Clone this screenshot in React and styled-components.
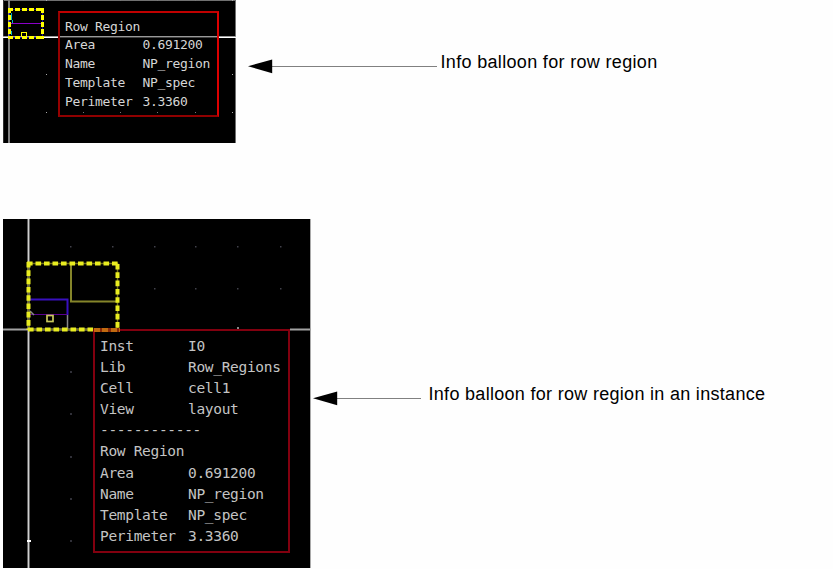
import React from "react";
import styled, { createGlobalStyle } from "styled-components";

const GlobalStyle = createGlobalStyle`
  body { margin: 0; background: #fefefe; overflow: hidden; }
`;

const Page = styled.main`
  width: 833px;
  height: 569px;
  box-sizing: border-box;
  padding-left: 3px;
  display: flex;
  flex-direction: column;
  gap: 76px;
  overflow: hidden;
`;

const Figure = styled.figure`
  margin: 0;
  display: flex;
  align-items: flex-start;
`;

const Canvas = styled.div`
  position: relative;
  flex: none;
  width: ${(p) => p.$width}px;
  height: ${(p) => p.$height}px;
  background: #000;
`;

const Plot = styled.svg`
  display: block;
  flex: none;
  shape-rendering: ${(p) => (p.$crisp ? "crispEdges" : "auto")};
`;

const Balloon = styled.dl`
  position: absolute;
  margin: 0;
  box-sizing: border-box;
  display: grid;
  align-content: start;
  white-space: pre;
  font-family: "DejaVu Sans Mono", monospace;
`;

const SmallBalloon = styled(Balloon)`
  left: 55px;
  top: 11px;
  width: 161px;
  height: 106px;
  padding: 4.6px 0 0 5px;
  border: solid;
  border-width: 2px 2px 2px 2px;
  border-color: #c00000 #dc0000 #900000 #960000;
  grid-template-columns: 77.5px 1fr;
  grid-auto-rows: 18.8px;
  line-height: 18.8px;
  font-size: 13px;
  letter-spacing: -0.33px;
  color: #d6d6d6;
`;

const LargeBalloon = styled(Balloon)`
  left: 90px;
  top: 109.5px;
  width: 197px;
  height: 224.5px;
  padding: 5.5px 0 0 5px;
  border: 2px solid #82000f;
  grid-template-columns: 88px 1fr;
  grid-auto-rows: 21.1px;
  line-height: 21.1px;
  font-size: 14.5px;
  letter-spacing: -0.31px;
  color: #c4c4c4;

  &::before {
    content: "";
    position: absolute;
    left: -1px;
    top: -3px;
    width: 26px;
    height: 4px;
    background: repeating-linear-gradient(90deg, #c06a10 0 5.6px, #8a2a08 5.6px 8.5px);
  }
`;

const Term = styled.dt`
  grid-column: ${(p) => (p.$wide ? "1 / -1" : "1")};
`;

const Value = styled.dd`
  margin: 0;
`;

const Callout = styled.figcaption`
  display: flex;
  align-items: flex-start;
  gap: ${(p) => p.$gap}px;
  margin: ${(p) => p.$top}px 0 0 ${(p) => p.$left}px;
`;

const ArrowBox = styled.span`
  padding-top: 7px;
`;

const Label = styled.span`
  font: 18px/20px "Liberation Sans", Arial, sans-serif;
  letter-spacing: ${(p) => p.$tracking}px;
  color: #000;
  white-space: nowrap;
`;

const region = [
  ["Row Region"],
  ["Area", "0.691200"],
  ["Name", "NP_region"],
  ["Template", "NP_spec"],
  ["Perimeter", "3.3360"],
];

const instance = [
  ["Inst", "I0"],
  ["Lib", "Row_Regions"],
  ["Cell", "cell1"],
  ["View", "layout"],
  ["------------"],
];

function Entries({ items }) {
  return items.map(([name, value]) => (
    <React.Fragment key={name}>
      <Term $wide={value === undefined}>{name}</Term>
      {value !== undefined && <Value>{value}</Value>}
    </React.Fragment>
  ));
}

function Dots({ xs, ys, size, fill }) {
  return ys.flatMap((y) =>
    xs.map((x) => <rect key={`${x}-${y}`} x={x} y={y} width={size} height={size} fill={fill} />)
  );
}

function Annotation({ width, top, left, gap, text, tracking }) {
  return (
    <Callout $top={top} $left={left} $gap={gap}>
      <ArrowBox>
        <Plot width={width} height="16" viewBox={`0 0 ${width} 16`}>
          <path d={`M24 7.5H${width}`} stroke="#808080" />
          <path d="M0 7.2L24.2 .4V14.3Z" fill="#000" />
        </Plot>
      </ArrowBox>
      <Label $tracking={tracking}>{text}</Label>
    </Callout>
  );
}

function RegionPlot() {
  return (
    <Plot $crisp width="233" height="143" viewBox="3 0 233 143">
      <path d="M3 .5H236M235.5 0V143" stroke="#707070" />
      <path d="M3.5 0V143" stroke="#303030" />
      <path d="M9 0V143" stroke="#808080" strokeWidth="2" />
      <path d="M3 37.5H59M218 37.5H236" stroke="#fff" />
      <path d="M3 36.5H236" stroke="#999" />
      <path d="M59 37.5H218" stroke="#404040" />
      <Dots xs={[46, 232]} ys={[0, 74, 112]} size={1} fill="#aaa" />
      <Dots xs={[83, 120, 157, 195]} ys={[0, 112]} size={1} fill="#777" />
      <path d="M9 23.5H43" stroke="#8a00c8" />
      <path d="M11.5 13V20M12.5 20V23M11.5 31V35" stroke="#00b7c9" />
      <rect x="9.5" y="9.5" width="33" height="28" fill="none" stroke="#2418a8" />
      <path d="M8 9.5H44M8 37.5H44" stroke="#ff0" strokeWidth="3" strokeDasharray="5 2" />
      <path d="M9.5 8V39M42.5 8V39" stroke="#ff0" strokeWidth="3" strokeDasharray="5 2" />
      <rect x="21.5" y="32.5" width="5" height="4" fill="#000" stroke="#ff0" />
    </Plot>
  );
}

function InstancePlot() {
  return (
    <Plot width="308" height="349" viewBox="3 219 308 349">
      <path d="M310.5 219V568" stroke="#aaa" />
      <path d="M28.5 219V568" stroke="#606060" strokeWidth="3" />
      <path d="M28.5 219V568" stroke="#d0d0d0" />
      <path d="M3 329.5H93M290 329.5H311" stroke="#a2a2a2" strokeWidth="2" />
      <rect x="27" y="540" width="4" height="2" fill="#fff" />
      <rect x="237" y="327" width="2" height="2" fill="#888" />
      <Dots xs={[70, 112, 154, 195, 237, 280]} ys={[246]} size={1.5} fill="#41414a" />
      <Dots xs={[154, 195, 237, 280]} ys={[288]} size={1.5} fill="#41414a" />
      <Dots xs={[70]} ys={[371, 413, 456, 498, 540]} size={2} fill="#303038" />
      <path d="M71 263V301.5H118" fill="none" stroke="#85852a" strokeWidth="2" />
      <path d="M30 299.5H67.5V315" fill="none" stroke="#3810bd" strokeWidth="2" />
      <path d="M30 314.5H67" stroke="#580090" />
      <path d="M67.5 315V330M30 311L34 315" stroke="#888" strokeWidth="1.5" />
      <rect x="47" y="315.5" width="6" height="6" fill="#000" stroke="#c8c85a" strokeWidth="1.7" />
      <path d="M94 329.5H28.5V263.5H117.5V329" fill="none" stroke="#73721c" strokeWidth="1.5" />
      <path d="M27 263.5H119M28 329.5H94" stroke="#e8ec20" strokeWidth="4" strokeDasharray="5.6 2.9" />
      <path d="M28.5 262V330M117.5 264V328" stroke="#e8ec20" strokeWidth="4" strokeDasharray="5.6 2.7" />
    </Plot>
  );
}

export default function App() {
  return (
    <>
      <GlobalStyle />
      <Page>
        <Figure>
          <Canvas $width={233} $height={143}>
            <RegionPlot />
            <SmallBalloon>
              <Entries items={region} />
            </SmallBalloon>
          </Canvas>
          <Annotation
            width={189}
            top={52}
            left={11.5}
            gap={4}
            tracking={0.33}
            text="Info balloon for row region"
          />
        </Figure>
        <Figure>
          <Canvas $width={308} $height={349}>
            <InstancePlot />
            <LargeBalloon>
              <Entries items={[...instance, ...region]} />
            </LargeBalloon>
          </Canvas>
          <Annotation
            width={108.5}
            top={165}
            left={1.5}
            gap={7.5}
            tracking={0.3}
            text="Info balloon for row region in an instance"
          />
        </Figure>
      </Page>
    </>
  );
}
